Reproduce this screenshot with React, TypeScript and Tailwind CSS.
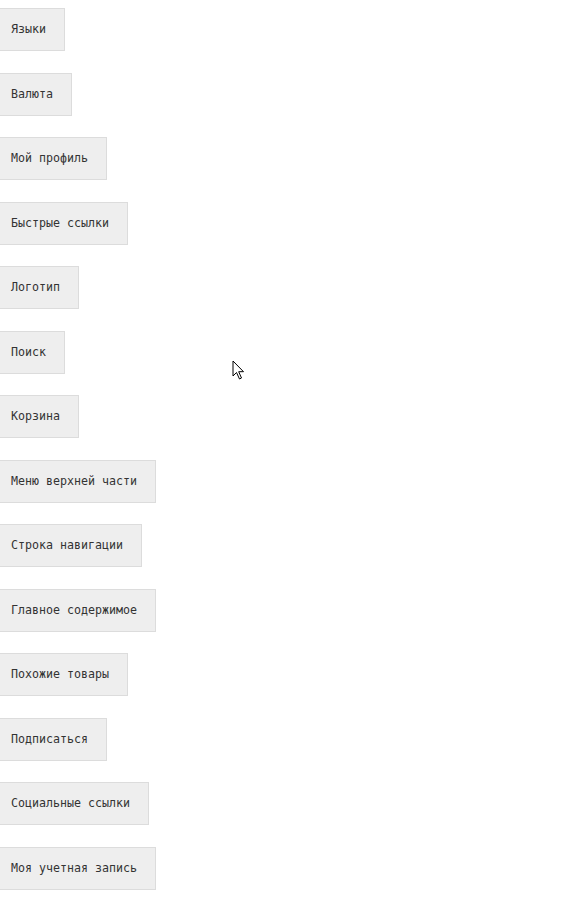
const items = [
  'Языки',
  'Валюта',
  'Мой профиль',
  'Быстрые ссылки',
  'Логотип',
  'Поиск',
  'Корзина',
  'Меню верхней части',
  'Строка навигации',
  'Главное содержимое',
  'Похожие товары',
  'Подписаться',
  'Социальные ссылки',
  'Моя учетная запись',
];

export default function App() {
  return (
    <div className="relative h-[906px] w-[585px] overflow-hidden bg-white">
      <div className="flex flex-col items-start gap-[21.5px] pt-[8px]">
        {items.map((label) => (
          <button
            key={label}
            className="ml-[-4px] h-[43px] whitespace-pre border border-[#dcdcdc] bg-[#eeeeee] pl-[14px] pr-[18px] text-left text-[11.63px] leading-[17px] text-[#333] [font-family:'DejaVu_Sans_Mono',monospace]"
          >
            {label}
          </button>
        ))}
      </div>

      {/* mouse cursor */}
      <svg
        className="absolute left-[232px] top-[360px]"
        width="14"
        height="21"
        viewBox="0 0 14 21"
      >
        <path
          d="M1 1 L1 16 L4.5 12.5 L7.5 19 L9.5 18 L6.7 11.7 L11.5 11.7 Z"
          fill="#fff"
          stroke="#000"
          strokeWidth="1"
          strokeLinejoin="miter"
        />
      </svg>
    </div>
  );
}
